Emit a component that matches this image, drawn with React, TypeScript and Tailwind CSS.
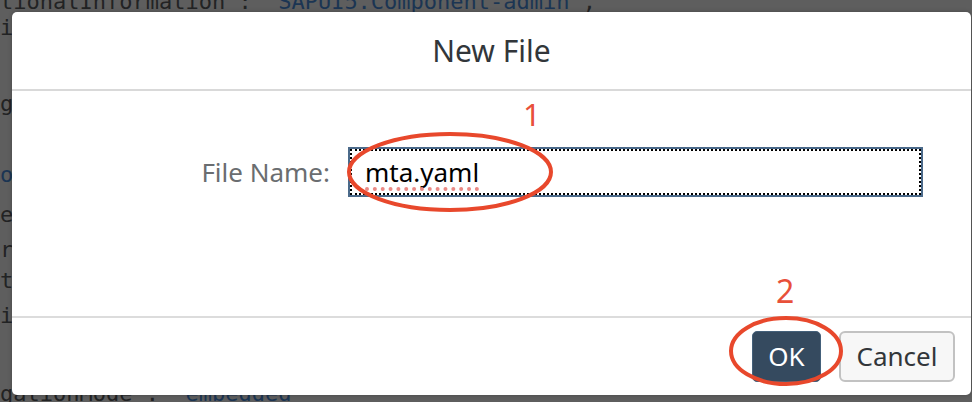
import React from 'react'

type CodeLine = { h: number; dark: string; blue?: string }

// slivers of the editor that peek out around the dialog
const CODE: CodeLine[] = [
    { h: 26, dark: 'tionalInformation": ', blue: '"SAPUI5.Component-admin"' },
    { h: 76, dark: 'id": "admin",' },
    { h: 71, dark: 'gation": {' },
    { h: 40, dark: '', blue: 'ol": "sap.ui5",' },
    { h: 35, dark: 'e": "1.0.0",' },
    { h: 31, dark: 'r": {' },
    { h: 35, dark: 't": "shell",' },
    { h: 78, dark: 'i": "app",' },
    { h: 37, dark: 'gationMode": ', blue: '"embedded"' },
]

function Background() {
    return (
        <div className="flex flex-col -mt-[17px] font-['DejaVu_Sans_Mono',monospace] text-[22px] leading-[37px] whitespace-pre">
            {CODE.map((l, i) => (
                <div key={i} style={{ height: l.h }} className="text-[#222324]">
                    {l.dark}
                    {l.blue && <span className="text-[#1b3553]">{l.blue}</span>}
                    {i === 0 && <span>,</span>}
                </div>
            ))}
        </div>
    )
}

function Dialog() {
    return (
        <div className="absolute left-[12px] top-[12px] w-[959px] h-[383px] bg-white rounded-[5px] flex flex-col font-['Noto_Sans',sans-serif] shadow-[0_0_4px_rgba(0,0,0,0.25)]">
            <div className="h-[77px] flex items-center justify-center text-[30px] text-[#32363a]">
                New File
            </div>
            <div className="h-[2px] bg-[#d9d9d9]" />
            <div className="h-[225px] pt-[56px]">
                <div className="flex items-center">
                    <div className="w-[318px] text-right text-[26px] text-[#6a6d70]">File Name:</div>
                    <div className="ml-[18px] w-[575px] h-[50px] border-2 border-[#4b6a8a] outline-2 outline-dotted outline-black outline-offset-[-4px] flex items-center pl-[15px] text-[26px] text-black">
                        <span className="relative">
                            mta.yaml
                            {/* spell-check squiggle */}
                            <span className="absolute left-0 right-0 bottom-[1px] border-b-[4px] border-dotted border-[#ea8a85]" />
                        </span>
                    </div>
                </div>
            </div>
            <div className="h-[2px] bg-[#dcdcdc]" />
            <div className="flex-1 flex items-center justify-end gap-[18px] pr-[16px]">
                <button className="h-[51px] w-[69px] rounded-[5px] bg-[#354a5f] border border-[#44607a] text-white text-[26px]">
                    OK
                </button>
                <button className="h-[51px] w-[116px] rounded-[6px] bg-[#f7f7f7] border-2 border-[#c2c2c2] text-[#32363a] text-[26px]">
                    Cancel
                </button>
            </div>
        </div>
    )
}

function Annotations() {
    return (
        <>
            <svg className="absolute inset-0 pointer-events-none" width="972" height="402">
                <ellipse cx="450" cy="172" rx="101" ry="38" fill="none" stroke="#e8482c" strokeWidth="4" />
                <ellipse cx="786" cy="351" rx="55" ry="33" fill="none" stroke="#e8482c" strokeWidth="4" />
            </svg>
            <span className="absolute left-[523px] top-[99px] text-[31px] leading-none text-[#e8503a] font-['Noto_Sans',sans-serif]">1</span>
            <span className="absolute left-[776px] top-[275px] text-[32px] leading-none text-[#e8503a] font-['Noto_Sans',sans-serif]">2</span>
        </>
    )
}

export default function App() {
    return (
        <div className="relative w-[972px] h-[402px] overflow-hidden bg-[#5e5e5e]">
            <Background />
            <Dialog />
            <Annotations />
        </div>
    )
}
